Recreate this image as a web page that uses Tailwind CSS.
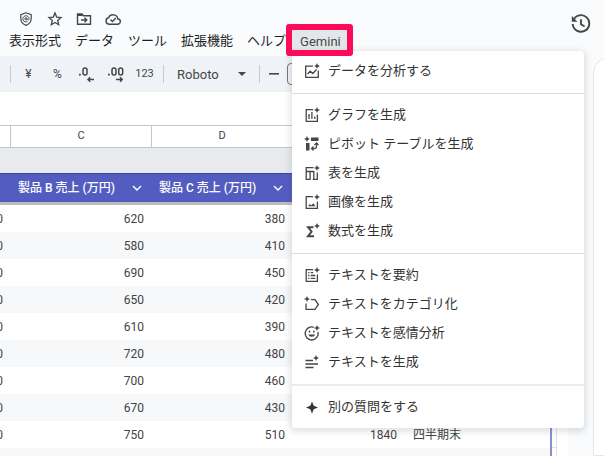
<!DOCTYPE html>
<html lang="ja">
<head>
    <meta charset="UTF-8">
    <meta name="viewport" content="width=device-width, initial-scale=1.0">
    <title>スプレッドシート</title>
    <script src="https://cdn.jsdelivr.net/npm/@tailwindcss/browser@4"></script>
</head>
<body class="h-screen overflow-hidden flex flex-col bg-[#f9fbfd] text-[#444746] font-['Roboto','Noto_Sans_CJK_JP',sans-serif]">

    <!-- Header -->
    <header class="h-14 shrink-0 flex justify-between items-start">
        <div class="flex flex-col">
            <!-- Document actions -->
            <div class="flex gap-[13px] pl-[18px] pt-[11px]">
                <button aria-label="ラベル" class="size-4">
                    <svg class="size-4" viewBox="0 0 16 16" fill="none" stroke="currentColor" stroke-width="1.2">
                        <path d="M8 1.8L2.8 3.6v4c0 3.2 2.1 5.6 5.2 6.8 3.1-1.2 5.2-3.6 5.2-6.8v-4z"/>
                        <circle cx="8" cy="7.8" r="1.1" stroke-width="1"/>
                        <path d="M9.2 7.8c0 1.6 1.9 1.4 1.9-.1A3.1 3.1 0 1 0 9.400 10.600" stroke-width="1"/>
                    </svg>
                </button>
                <button aria-label="スター" class="size-4">
                    <svg class="size-4" viewBox="0 0 16 16" fill="none" stroke="currentColor" stroke-width="1.3">
                        <path d="M8 2l1.700 4.100 4.300.4-3.300 2.900 1 4.300L8 11.400l-3.700 2.300 1-4.300L2 6.500l4.300-.4z"/>
                    </svg>
                </button>
                <button aria-label="移動" class="size-4">
                    <svg class="size-4" viewBox="0 0 16 16" fill="none" stroke="currentColor" stroke-width="1.4">
                        <path d="M1.500 3H6l1.500 1.700h7v8.600h-13z"/>
                        <path d="M1.500 4h5" stroke-width="2"/>
                        <path d="M5 9h5.500M8.500 6.700L10.800 9l-2.300 2.300"/>
                    </svg>
                </button>
                <button aria-label="保存済み" class="size-4">
                    <svg class="size-4 overflow-visible" viewBox="0 0 16 16" fill="none" stroke="currentColor" stroke-width="1.4">
                        <path d="M4 13.200h8.600a2.600 2.600 0 0 0 .3-5.200A4.900 4.900 0 0 0 3.600 6.700 3.300 3.300 0 0 0 4 13.200z"/>
                        <path d="M5.500 8.600l1.900 1.900 3.400-3.400"/>
                    </svg>
                </button>
            </div>

            <!-- Menu bar -->
            <nav class="flex items-center gap-[14px] pl-[9px] pt-[3px] h-[23px] text-[13px] leading-5 whitespace-nowrap text-[#1f1f1f]">
                <button class="pt-[2px]">表示形式</button>
                <button class="pt-[2px]">データ</button>
                <button class="pt-[2px]">ツール</button>
                <button class="pt-[2px]">拡張機能</button>
                <button class="pt-[2px]">ヘルプ</button>
                <div class="relative -ml-2">
                    <button class="block h-5 pt-[2px] pl-2 pr-[6px] bg-[#e3e7eb] text-[#444746]">Gemini</button>

                    <!-- Gemini menu -->
                    <div class="absolute left-0 top-full z-10 mt-px w-[292px] pt-[5px] pb-[7px] bg-white rounded shadow-[0_2px_6px_2px_rgba(60,64,67,0.15)]">
                        <button class="flex w-full items-center h-[29px] gap-2 pl-3 text-[#333]">
                            <svg class="size-4" viewBox="0 0 16 16" fill="none" stroke="#444746" stroke-width="1.3">
                                <path d="M9 3.200H1.700v11.100h12.600V7.500"/>
                                <path d="M3.500 11l2.700-2.800 2.600 2.300 3.700-4"/>
                                <path fill="#444746" stroke="none" d="M13 0l.9 2.100 2.100.9-2.100.9L13 6l-.9-2.100L10 3l2.100-.9z"/>
                            </svg>
                            <span>データを分析する</span>
                        </button>
                        <hr class="mt-2 mb-[6px] border-0 h-px bg-[#dadce0]">
                        <button class="flex w-full items-center h-[29px] gap-2 pl-3 text-[#333]">
                            <svg class="size-4" viewBox="0 0 16 16" fill="none" stroke="#444746" stroke-width="1.3">
                                <path d="M9 2.700H2.200v11.600h11.200V7.500"/>
                                <path d="M5 12V7M7.900 12V5M10.800 12V9.500"/>
                                <path fill="#444746" stroke="none" d="M13 0l.9 2.100 2.100.9-2.100.9L13 6l-.9-2.100L10 3l2.100-.9z"/>
                            </svg>
                            <span>グラフを生成</span>
                        </button>
                        <button class="flex w-full items-center h-[29px] gap-2 pl-3 text-[#333]">
                            <svg class="size-4" viewBox="0 0 16 16" fill="none" stroke="#444746" stroke-width="1.3">
                                <path fill="#444746" stroke="none" d="M7 1.500h7.500V5H7zM2 7h3.500v7.500H2z"/>
                                <path d="M12.500 7.500v3.300q0 1.700-1.700 1.700H8"/>
                                <path d="M10.500 9l2-2 2 2M9.500 10.500l-2 2 2 2"/>
                                <path fill="#444746" stroke="none" d="M3 0l.9 2.100 2.100.9-2.100.9L3 6l-.9-2.100L0 3l2.100-.9z"/>
                            </svg>
                            <span>ピボット テーブルを生成</span>
                        </button>
                        <button class="flex w-full items-center h-[29px] gap-2 pl-3 text-[#333]">
                            <svg class="size-4" viewBox="0 0 16 16" fill="none" stroke="#444746" stroke-width="1.3">
                                <path d="M9.500 2.700H2.200v11.600h3.900V6.500M2.200 6.500h7.600v7.800H8.700M9.800 14.300h3.500V7.500"/>
                                <path fill="#444746" stroke="none" d="M13 0l.9 2.100 2.100.9-2.100.9L13 6l-.9-2.100L10 3l2.100-.9z"/>
                            </svg>
                            <span>表を生成</span>
                        </button>
                        <button class="flex w-full items-center h-[29px] gap-2 pl-3 text-[#333]">
                            <svg class="size-4" viewBox="0 0 16 16" fill="none" stroke="#444746" stroke-width="1.3">
                                <path d="M9 2.700H2.200v11.600h11.200V7.500"/>
                                <path fill="#444746" stroke="none" d="M4 12.200l1.900-2.200 1.400 1.400 1.900-2.200 2.400 3z"/>
                                <path fill="#444746" stroke="none" d="M13 0l.9 2.100 2.100.9-2.100.9L13 6l-.9-2.100L10 3l2.100-.9z"/>
                            </svg>
                            <span>画像を生成</span>
                        </button>
                        <button class="flex w-full items-center h-[29px] gap-2 pl-3 text-[#333]">
                            <svg class="size-4" viewBox="0 0 16 16" fill="none" stroke="#444746" stroke-width="1.9">
                                <path d="M9.500 4.200H4l3.600 4.500L4 13.200h6"/>
                                <path fill="#444746" stroke="none" d="M13 0l.9 2.100 2.100.9-2.100.9L13 6l-.9-2.100L10 3l2.100-.9z"/>
                            </svg>
                            <span>数式を生成</span>
                        </button>
                        <hr class="mt-2 mb-[6px] border-0 h-px bg-[#dadce0]">
                        <button class="flex w-full items-center h-[29px] gap-2 pl-3 text-[#333]">
                            <svg class="size-4" viewBox="0 0 16 16" fill="none" stroke="#444746" stroke-width="1.3">
                                <path d="M9 2.700H2.200v11.600h11.200V7.500"/>
                                <path d="M4.200 5.700h1.300M4.200 8.500h1.300M4.200 11.300h1.300M6.700 5.700h2.500M6.700 8.500h4.600M6.700 11.300h4.600"/>
                                <path fill="#444746" stroke="none" d="M13 0l.9 2.100 2.100.9-2.100.9L13 6l-.9-2.100L10 3l2.100-.9z"/>
                            </svg>
                            <span>テキストを要約</span>
                        </button>
                        <button class="flex w-full items-center h-[29px] gap-2 pl-3 text-[#333]">
                            <svg class="size-4" viewBox="0 0 16 16" fill="none" stroke="#444746" stroke-width="1.3">
                                <path d="M7 3.700h4l3.400 4.800-3.400 4.800H2V7.500"/>
                                <path fill="#444746" stroke="none" d="M3 0l.9 2.100 2.100.9-2.100.9L3 6l-.9-2.100L0 3l2.100-.9z"/>
                            </svg>
                            <span>テキストをカテゴリ化</span>
                        </button>
                        <button class="flex w-full items-center h-[29px] gap-2 pl-3 text-[#333]">
                            <svg class="size-4" viewBox="0 0 16 16" fill="none" stroke="#444746" stroke-width="1.4">
                                <path d="M9.800 2.300A6.500 6.500 0 1 0 14 7"/>
                                <path fill="#444746" stroke="none" d="M4.200 9.400h7a3.600 3.100 0 0 1-7 0z"/>
                                <path d="M4.700 6.600h1.600M9 6.600h1.600" stroke-width="1.7"/>
                                <path fill="#444746" stroke="none" d="M13 0l.9 2.100 2.100.9-2.100.9L13 6l-.9-2.100L10 3l2.100-.9z"/>
                            </svg>
                            <span>テキストを感情分析</span>
                        </button>
                        <button class="flex w-full items-center h-[29px] gap-2 pl-3 text-[#333]">
                            <svg class="size-4" viewBox="0 0 16 16" fill="none" stroke="#444746" stroke-width="1.4">
                                <path d="M1.500 6.500H9M1.500 10H14M1.500 13.500h8"/>
                                <path fill="#444746" stroke="none" d="M12 1l.9 2.100 2.100.9-2.100.9L12 7l-.9-2.100L9 4l2.100-.9z"/>
                            </svg>
                            <span>テキストを生成</span>
                        </button>
                        <hr class="mt-2 mb-[6px] border-0 h-[2px] bg-[#ececec]">
                        <button class="flex w-full items-center h-[29px] gap-2 pl-3 text-[#333]">
                            <svg class="size-4" viewBox="0 0 16 16" fill="#333">
                                <path d="M8 2.500l1.700 4.300L14 8.500l-4.300 1.700L8 14.500l-1.700-4.300L2 8.500l4.300-1.700z"/>
                            </svg>
                            <span>別の質問をする</span>
                        </button>
                    </div>

                    <!-- Highlight frame -->
                    <div class="absolute -inset-[6px] z-20 border-[6px] border-[#fd0a58] rounded-[3px] pointer-events-none"></div>
                </div>
            </nav>
        </div>
        <button aria-label="変更履歴" class="mt-[14px] mr-[13px]">
            <svg class="size-5" viewBox="0 0 20 20" fill="none" stroke="currentColor" stroke-width="1.9">
                <path d="M2.300 6.300A8.300 8.300 0 1 1 1.700 10"/>
                <path d="M10 5.300v5l3.600 2.200"/>
                <path fill="currentColor" stroke="none" d="M.8 2v5.700h5.700z"/>
            </svg>
        </button>
    </header>

    <div class="flex flex-1 min-h-0">
        <main class="flex-1 min-w-0 flex flex-col overflow-hidden bg-white">
            <!-- Toolbar -->
            <div class="h-9 shrink-0 flex items-center pl-[10px] bg-[#eff3f8] text-xs">
                <div class="w-px h-[18px] mr-[3px] bg-[#c7cbd0]"></div>
                <button class="w-[29px]">¥</button>
                <button class="w-[29px]">%</button>
                <button aria-label="小数点以下の桁数を減らす" class="w-[29px] flex justify-center">
                    <svg class="w-4 h-5" viewBox="0 0 16 20" fill="none" stroke="currentColor" stroke-width="1.5">
                        <path d="M0 10.700h1.800" stroke-width="1.8"/>
                        <rect x="4" y="4" width="4" height="7" rx="2"/>
                        <path d="M15 15.500H9M11.200 13.300L9 15.500l2.200 2.200"/>
                    </svg>
                </button>
                <button aria-label="小数点以下の桁数を増やす" class="w-[29px] flex justify-center">
                    <svg class="w-4 h-5" viewBox="0 0 16 20" fill="none" stroke="currentColor" stroke-width="1.5">
                        <path d="M0 10.700h1.800" stroke-width="1.8"/>
                        <rect x="4" y="4" width="4" height="7" rx="2"/>
                        <rect x="10.700" y="4" width="4" height="7" rx="2"/>
                        <path d="M8 15.500h6M12 13.300l2.200 2.200-2.200 2.200"/>
                    </svg>
                </button>
                <button class="w-[29px] text-[11px]">123</button>
                <div class="w-px h-[18px] ml-1 mr-[13px] bg-[#c7cbd0]"></div>
                <div class="flex items-center w-[69px]">
                    <select aria-label="フォント" class="appearance-none bg-transparent flex-1 pt-px text-[13px] leading-5">
                        <option>Roboto</option>
                    </select>
                    <svg class="w-2 h-1" viewBox="0 0 8 4" fill="currentColor"><path d="M0 0h8L4 4z"/></svg>
                </div>
                <div class="w-px h-[18px] ml-[13px] bg-[#c7cbd0]"></div>
                <button aria-label="文字サイズを縮小" class="w-[27px] flex justify-center">
                    <svg class="w-[10px] h-[2px]" viewBox="0 0 10 2" fill="currentColor"><path d="M0 0h10v1.600H0z"/></svg>
                </button>
                <input type="text" aria-label="文字サイズ" class="w-8 h-[22px] border border-[#747775] rounded bg-transparent text-center">
            </div>

            <!-- Sheet -->
            <table class="mt-[33px] -ml-[130px] w-[687px] shrink-0 table-fixed border-separate border-spacing-0 text-xs text-right text-[#434343] whitespace-nowrap">
                <colgroup>
                    <col class="w-[141px]"><col class="w-[141px]"><col class="w-[141px]"><col class="w-[112px]"><col class="w-[147px]"><col class="w-[5px]">
                </colgroup>
                <thead>
                    <tr class="h-[23px] text-[11px] text-center">
                        <th class="p-0 border-y border-r border-[#c4c7c5]"></th>
                        <th class="p-0 font-normal border-y border-r border-[#c4c7c5]">C</th>
                        <th class="p-0 font-normal border-y border-r border-[#c4c7c5]">D</th>
                        <th class="p-0 border-y border-r border-[#c4c7c5]"></th>
                        <th class="p-0 border-y border-r border-[#c4c7c5]"></th>
                        <th class="p-0 border-y border-[#c4c7c5]"></th>
                    </tr>
                    <tr class="h-[25px] bg-[#e8eaee]"><td colspan="6" class="p-0"></td></tr>
                    <tr class="h-[29px] bg-[#535dc1] text-white text-left">
                        <th class="p-0 border-t border-[#3b439c]"></th>
                        <th class="p-0 border-t border-[#3b439c] font-medium">
                            <div class="flex items-center justify-between pl-[7px] pr-[10px]">
                                <span>製品 B 売上 (万円)</span>
                                <svg class="w-[10px] h-[6px]" viewBox="0 0 10 6" fill="none" stroke="currentColor" stroke-width="1.4"><path d="M1 1l4 4 4-4"/></svg>
                            </div>
                        </th>
                        <th class="p-0 border-t border-[#3b439c] font-medium">
                            <div class="flex items-center justify-between pl-[7px] pr-[10px]">
                                <span>製品 C 売上 (万円)</span>
                                <svg class="w-[10px] h-[6px]" viewBox="0 0 10 6" fill="none" stroke="currentColor" stroke-width="1.4"><path d="M1 1l4 4 4-4"/></svg>
                            </div>
                        </th>
                        <th class="p-0 border-t border-[#3b439c]"></th>
                        <th class="p-0 border-t border-[#3b439c]"></th>
                        <th class="p-0 bg-white"></th>
                    </tr>
                    <tr class="h-[3px] bg-[#bdbdbd]"><td colspan="6" class="p-0"></td></tr>
                </thead>
                <tbody class="[&_td]:py-0 [&_td]:px-2">
                    <tr class="h-[27px]"><td>0</td><td>620</td><td>380</td><td></td><td></td><td></td></tr>
                    <tr class="h-[27px] bg-[#f6f8f9]"><td>0</td><td>580</td><td>410</td><td></td><td></td><td></td></tr>
                    <tr class="h-[27px]"><td>0</td><td>690</td><td>450</td><td></td><td></td><td></td></tr>
                    <tr class="h-[27px] bg-[#f6f8f9]"><td>0</td><td>650</td><td>420</td><td></td><td></td><td></td></tr>
                    <tr class="h-[27px]"><td>0</td><td>610</td><td>390</td><td></td><td></td><td></td></tr>
                    <tr class="h-[27px] bg-[#f6f8f9]"><td>0</td><td>720</td><td>480</td><td></td><td></td><td></td></tr>
                    <tr class="h-[27px]"><td>0</td><td>700</td><td>460</td><td></td><td></td><td></td></tr>
                    <tr class="h-[27px] bg-[#f6f8f9]"><td>0</td><td>670</td><td>430</td><td></td><td></td><td></td></tr>
                    <tr class="h-[27px]">
                        <td>0</td><td>750</td><td>510</td><td>1840</td>
                        <td class="text-left border-r-2 border-[#8a90cf]">四半期末</td>
                        <td class="border-b border-r border-[#e1e1e1]"></td>
                    </tr>
                    <tr class="h-[27px] bg-[#f6f8f9]">
                        <td></td><td></td><td></td><td></td>
                        <td class="border-r-2 border-[#8a90cf]"></td>
                        <td class="bg-white border-r border-[#e1e1e1]"></td>
                    </tr>
                </tbody>
            </table>
        </main>

        <!-- Side panel -->
        <aside class="w-9 shrink-0 pl-[25px] pt-px overflow-hidden">
            <div class="h-full w-40 bg-white border border-[#e3e5e8] rounded-tl-2xl"></div>
        </aside>
    </div>
</body>
</html>
